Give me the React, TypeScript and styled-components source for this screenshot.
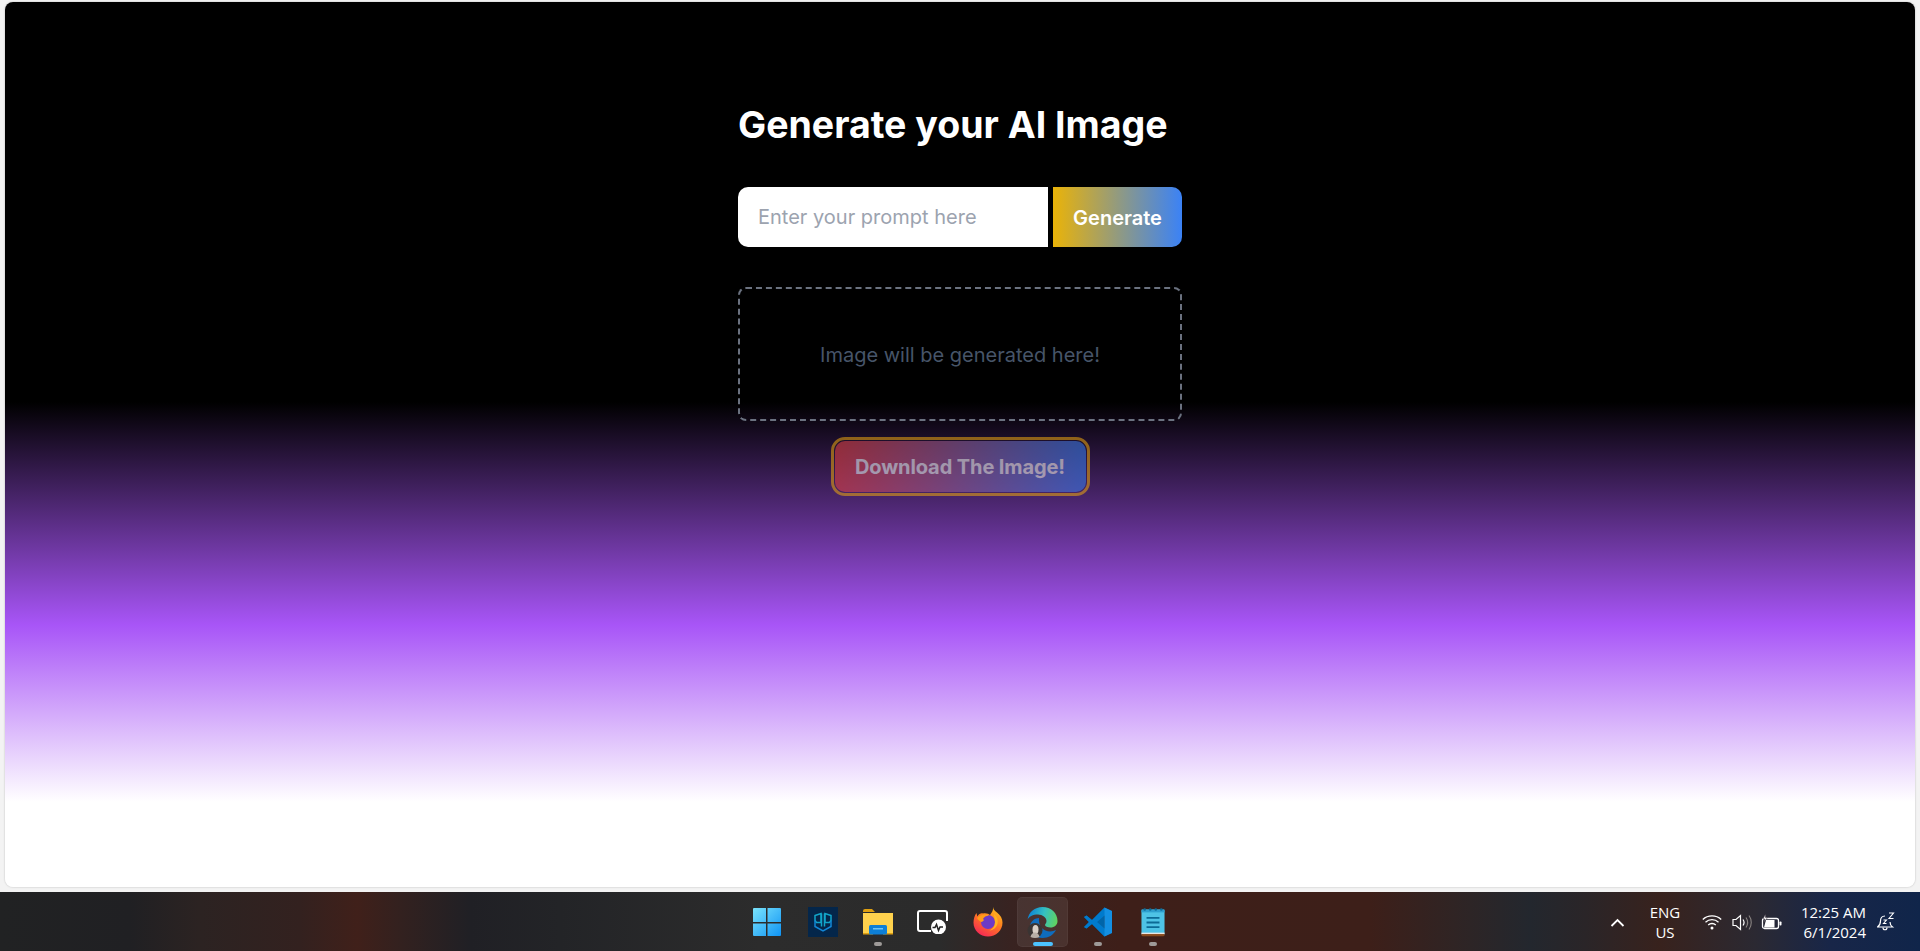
import React, {FC} from 'react';
import styled, {createGlobalStyle} from 'styled-components';

const GlobalStyle = createGlobalStyle`
    html, body {
        margin: 0;
        padding: 0;
        height: 951px;
        overflow: hidden;
        background: #f3f3f3;
        font-family: Inter, "Noto Sans", sans-serif;
    }
`;

const Screen = styled.div`
    width: 1920px;
    height: 951px;
    display: flex;
    flex-direction: column;
    background: #f3f3f3;
`;

const BrowserWindow = styled.main`
    flex: none;
    height: 885px;
    margin: 2px 5px 5px 5px;
    border-radius: 8px;
    box-shadow: 0 0 2px rgba(0, 0, 0, 0.25);
    background: linear-gradient(
        to bottom,
        #000000 0,
        #000000 400px,
        #a855f7 623px,
        #ffffff 800px,
        #ffffff 100%
    );
    display: flex;
    flex-direction: column;
    align-items: center;
    padding-top: 99px;
    box-sizing: border-box;
`;

const Panel = styled.section`
    width: 444px;
    display: flex;
    flex-direction: column;
`;

const Title = styled.h1`
    margin: 0;
    font-size: 37.500px;
    line-height: 48px;
    font-weight: 700;
    color: #ffffff;
`;

const PromptRow = styled.form`
    margin-top: 38px;
    height: 60px;
    display: flex;
    gap: 5px;
`;

const PromptInput = styled.input`
    width: 310px;
    height: 60px;
    box-sizing: border-box;
    border: none;
    outline: none;
    padding: 0 20px;
    font-family: inherit;
    font-size: 20px;
    color: #111827;
    background: #ffffff;
    border-radius: 10px 0 0 10px;

    &::placeholder {
        color: #9ca3af;
        opacity: 1;
    }
`;

const GenerateButton = styled.button`
    width: 129px;
    height: 60px;
    border: none;
    padding: 1px 0 0;
    font-family: inherit;
    font-size: 20px;
    font-weight: 600;
    color: #ffffff;
    background: linear-gradient(to right, #eab308, #3b82f6);
    border-radius: 0 10px 10px 0;
`;

const Placeholder = styled.div`
    margin-top: 40px;
    height: 134px;
    box-sizing: border-box;
    border: 2px dashed #6b7280;
    border-radius: 8px;
    padding-top: 2px;
    display: flex;
    align-items: center;
    justify-content: center;
    font-size: 20px;
    font-weight: 400;
    color: #475569;
`;

const DownloadButton = styled.button`
    align-self: center;
    margin-top: 20px;
    width: 251px;
    height: 51px;
    border: none;
    padding: 0;
    font-family: inherit;
    font-size: 20px;
    font-weight: 700;
    letter-spacing: -0.100px;
    color: #ffffff;
    background: linear-gradient(to right, #ef4444, #3b82f6);
    border-radius: 10px;
    outline: 3px solid #eea80f;
    outline-offset: 1px;
    opacity: 0.55;
`;

const Taskbar = styled.footer`
    flex: 1;
    position: relative;
    padding-top: 1px;
    display: flex;
    align-items: center;
    justify-content: center;
    background: linear-gradient(
        to right,
        #212223 0,
        #202023 130px,
        #2c2322 200px,
        #33211f 300px,
        #40201a 357px,
        #33211f 400px,
        #202025 470px,
        #232427 560px,
        #2c2c2c 760px,
        #2b2b2b 940px,
        #382321 1010px,
        #3e1f19 1120px,
        #3d1f19 1370px,
        #2d2526 1470px,
        #23272e 1530px,
        #2a2528 1585px,
        #38221d 1660px,
        #2b2932 1755px,
        #182648 1830px,
        #10254a 1920px
    );
`;

const AppStrip = styled.div`
    display: flex;
    align-items: center;
`;

const AppSlot = styled.div<{$active?: boolean}>`
    position: relative;
    width: 51px;
    height: 50px;
    margin: 0 2px;
    border-radius: 5px;
    display: flex;
    align-items: center;
    justify-content: center;
    background: ${props => (props.$active ? 'rgba(255, 255, 255, 0.08)' : 'transparent')};
    box-shadow: ${props => (props.$active ? 'inset 0 0 0 1px rgba(255, 255, 255, 0.04)' : 'none')};
`;

const RunDot = styled.span<{$active?: boolean}>`
    position: absolute;
    left: 50%;
    bottom: 1px;
    transform: translateX(-50%);
    width: ${props => (props.$active ? '20px' : '8px')};
    height: 4px;
    border-radius: 2px;
    background: ${props => (props.$active ? '#4cc2ff' : '#9e9a98')};
`;

const Tray = styled.div`
    position: absolute;
    top: 0;
    bottom: 0;
    right: 14px;
    padding-top: 1px;
    display: flex;
    align-items: center;
    color: #ffffff;
`;

const TrayText = styled.div<{$align: string; $width: number}>`
    width: ${props => props.$width}px;
    text-align: ${props => props.$align};
    font-family: "Open Sans", "Noto Sans", sans-serif;
    font-size: 15px;
    line-height: 20px;
    color: #ffffff;
`;

const TrayIcon = styled.span<{$width: number}>`
    width: ${props => props.$width}px;
    display: flex;
    justify-content: center;
`;

const WindowsIcon: FC = () => (
    <svg width="30" height="30" viewBox="1 0 30 30">
        <defs>
            <linearGradient id="win" x1="0" y1="0" x2="1" y2="1">
                <stop offset="0" stopColor="#7ae3fb" />
                <stop offset="1" stopColor="#0f94f5" />
            </linearGradient>
        </defs>
        <path fill="url(#win)" d="M1 2a1 1 0 0 1 1-1h12v14H1zM15.500 1H28a1 1 0 0 1 1 1v13H15.500zM1 16.500h13V29H2a1 1 0 0 1-1-1zM15.500 16.500H29V28a1 1 0 0 1-1 1H15.500z" />
    </svg>
);

const ShieldIcon: FC = () => (
    <svg width="30" height="30" viewBox="0 0 30 30">
        <rect width="30" height="30" fill="#04264a" />
        <g fill="none" stroke="#12a5c9" strokeWidth="1.500">
            <path d="M7 8.500l6-2v9H8.500L7 13.500zM23 8.500l-6-2v9h4.500l1.500-2z" />
            <path d="M13.500 6.500v13M16.500 6.500v13" />
            <path stroke="#1287d6" d="M7 13.500v6l8 4.500 8-4.500v-6" />
        </g>
    </svg>
);

const FolderIcon: FC = () => (
    <svg width="30" height="28" viewBox="0 0 30 28">
        <path fill="#e0a010" d="M0 3a2 2 0 0 1 2-2h7l3 3h-12z" />
        <path fill="#ffd24d" d="M0 5h30v21H0z" />
        <path fill="#e0a010" d="M0 25h10v1.500H0zM20 25h10v1.500H20z" />
        <rect x="6" y="17" width="18" height="9.500" rx="1.500" fill="#0e7fd6" />
        <rect x="10" y="20" width="10" height="1.500" fill="#6ec4f5" />
    </svg>
);

const MonitorIcon: FC = () => (
    <svg width="31" height="24" viewBox="0 0 31 24">
        <path fill="none" stroke="#ffffff" strokeWidth="2" d="M14 21H3a2 2 0 0 1-2-2V3a2 2 0 0 1 2-2h25a2 2 0 0 1 2 2v8" />
        <circle cx="21.500" cy="17" r="7.500" fill="#ffffff" />
        <path fill="none" stroke="#222222" strokeWidth="1.500" d="M15.500 17.500h2.500l1.500-3 2 6 1.500-3.500h3" />
    </svg>
);

const FirefoxIcon: FC = () => (
    <svg width="30" height="30" viewBox="0 0 30 30">
        <defs>
            <linearGradient id="fx" x1="0.800" y1="0" x2="0.200" y2="1">
                <stop offset="0" stopColor="#ffc21f" />
                <stop offset="0.450" stopColor="#ff7a1f" />
                <stop offset="1" stopColor="#f5215a" />
            </linearGradient>
        </defs>
        <path fill="url(#fx)" d="M20 0c.5 2.500 1.500 3.500 4 5.500 3.500 2.800 5.500 6 5.500 10 0 8-6.500 14-14.500 14S.5 23.500.5 15.500C.5 12 1.500 8.500 3.500 6l.8 3.500C6 6.500 8.500 6 10 6.500c3-.8 6 .5 7 1.500 2-2.500 3.500-5 3-8z" />
        <circle cx="15" cy="15" r="7" fill="#6d3bc5" />
        <path fill="#ff9c1a" d="M4 11c3-3 8-4.500 12-2.500-3 .3-5 1.500-6 3.500 2 1 0 2.500-1.500 3C7 14.500 5 13 4 11z" />
        <path fill="#ffb31f" d="M21 7c3 2.500 4.500 6 3.500 10-1 3-3.500 6-8 6.500 3.500-1.500 5.500-4.500 5.500-8 0-3-1-6-1-8.500z" />
    </svg>
);

const EdgeIcon: FC = () => (
    <svg width="31" height="31" viewBox="0 0 31 31">
        <defs>
            <linearGradient id="edgeTop" x1="0" y1="0.500" x2="1" y2="0.700">
                <stop offset="0" stopColor="#0c83d4" />
                <stop offset="0.500" stopColor="#35c1c0" />
                <stop offset="1" stopColor="#62d35c" />
            </linearGradient>
        </defs>
        <path fill="url(#edgeTop)" d="M0.500 13C1.500 5 8 0 15.500 0 24 0 30.500 6 30.500 14c0 4-3 6.500-7 6.500-3 0-5.500-1-5.500-2.500 0-1 1.500-1.500 1.500-4 0-3.500-4-6.500-8.500-6.500-5 0-9.500 2-10.500 5.500z" />
        <path fill="#0f6cbd" d="M12 11c-5 0-9 4-9 9 0 6 6 11 12.500 11 6 0 11-3 13.500-8-3 1.500-7 2-10.500.5-4-2-7-5.500-6.500-12.500z" />
        <circle cx="8" cy="23.500" r="7.500" fill="#3a3433" />
        <ellipse cx="8.500" cy="22.500" rx="3" ry="4.500" fill="#d9cfc6" />
        <path fill="#b8aea6" d="M3.500 30c.5-3 2.500-4.500 4.500-4.500s4 1.500 4.500 4.500c-2.500 1.200-6.500 1.200-9 0z" />
    </svg>
);

const VsCodeIcon: FC = () => (
    <svg width="30" height="30" viewBox="0 0 30 30">
        <path fill="#0065a9" d="M21.500 0.500L9 13 3.500 8.500 1 10l5 5-5 5 2.500 1.500L9 17l12.500 12.500z" />
        <path fill="#007acc" d="M21.500 0.500L29 4v22l-7.500 3.500L9 17l-5.500 4.500L1 20l5-5-5-5 2.500-1.500L9 13zM21.500 8.500L14 15l7.500 6.500z" />
        <path fill="#1f9cf0" d="M21.500 0.500L29 4v22l-7.500 3.500z" opacity="0.600" />
    </svg>
);

const NotepadIcon: FC = () => (
    <svg width="24" height="31" viewBox="0 0 26 31">
        <rect x="0.500" y="1.500" width="25" height="28" rx="1.500" fill="#4ec3e6" />
        <path fill="#2e9fcf" d="M0.500 1.500h25v3h-25z" />
        <path fill="#8a4b1e" d="M0.500 27.500h25V29a1.500 1.500 0 0 1-1.500 1.500H2A1.500 1.500 0 0 1 .5 29z" />
        <path fill="#e8e6e3" d="M0.500 26.500h25v1.500h-25z" />
        <path stroke="#0c6a96" strokeWidth="2" d="M6 10.500h14M6 15.500h14M6 20.500h14" />
        <g fill="#0e6d99">
            <circle cx="4" cy="1.500" r="1.400" />
            <circle cx="10" cy="1.500" r="1.400" />
            <circle cx="16" cy="1.500" r="1.400" />
            <circle cx="22" cy="1.500" r="1.400" />
        </g>
    </svg>
);

const ChevronIcon: FC = () => (
    <svg width="15" height="9" viewBox="0 0 14 9">
        <path fill="none" stroke="#ffffff" strokeWidth="1.800" d="M1 8l6-6 6 6" />
    </svg>
);

const WifiIcon: FC = () => (
    <svg width="20" height="16" viewBox="0 0 20 16">
        <g fill="none" stroke="#ffffff" strokeWidth="1.300">
            <path d="M0.800 5.500c5-4.800 13.400-4.800 18.400 0" />
            <path d="M3.500 8.200c3.600-3.400 9.400-3.400 13 0" />
            <path d="M6.200 11c2.100-2 5.500-2 7.600 0" />
        </g>
        <circle cx="10" cy="14" r="1.500" fill="#ffffff" />
    </svg>
);

const SpeakerIcon: FC = () => (
    <svg width="21" height="17" viewBox="0 0 21 17">
        <path fill="none" stroke="#ffffff" strokeWidth="1.200" d="M1 5.500h3L8.500 1.500v14L4 11.500H1z" />
        <path fill="none" stroke="#ffffff" strokeWidth="1.200" d="M11 5.500c1.200 1.700 1.200 4.300 0 6" />
        <path fill="none" stroke="#8a8583" strokeWidth="1.100" d="M14 3.500c2 3 2 7 0 10M17 1.500c3 4 3 10 0 14" />
    </svg>
);

const BatteryIcon: FC = () => (
    <svg width="21" height="17" viewBox="0 0 21 17">
        <rect x="1.500" y="4.500" width="16" height="10" rx="2" fill="none" stroke="#ffffff" strokeWidth="1.300" />
        <path fill="#ffffff" d="M3 13.500l2-7.500h8.500v7.500z" />
        <rect x="18.500" y="7.500" width="2" height="4" rx="0.800" fill="#ffffff" />
        <path fill="#ffffff" d="M4.500 0L2 5h2l-1 3.500L6.500 3.500h-2z" stroke="#2a2230" strokeWidth="0.500" />
    </svg>
);

const BellIcon: FC = () => (
    <svg width="18" height="20" viewBox="0 0 18 20">
        <path fill="none" stroke="#ffffff" strokeWidth="1.200" d="M8 4C5 4 3.500 6 3.500 9c0 3-1 4.500-3 6h15c-2-1.500-2.500-3-2.500-5" />
        <path fill="none" stroke="#ffffff" strokeWidth="1.200" d="M6 15.500c0 3 4 3 4 0" />
        <path fill="none" stroke="#ffffff" strokeWidth="1.100" d="M6.500 8h3l-3 3.500h3M12 1h4.500L12 6.500h4.500" />
    </svg>
);

const apps = [
    {icon: <WindowsIcon />},
    {icon: <ShieldIcon />},
    {icon: <FolderIcon />, running: true},
    {icon: <MonitorIcon />},
    {icon: <FirefoxIcon />},
    {icon: <EdgeIcon />, active: true},
    {icon: <VsCodeIcon />, running: true},
    {icon: <NotepadIcon />, running: true},
];

const App: FC = () => (
    <Screen>
        <GlobalStyle />
        <BrowserWindow>
            <Panel>
                <Title>Generate your AI Image</Title>
                <PromptRow>
                    <PromptInput type="text" placeholder="Enter your prompt here" />
                    <GenerateButton type="button">Generate</GenerateButton>
                </PromptRow>
                <Placeholder>Image will be generated here!</Placeholder>
                <DownloadButton type="button">Download The Image!</DownloadButton>
            </Panel>
        </BrowserWindow>
        <Taskbar>
            <AppStrip>
                {apps.map((app, i) => (
                    <AppSlot key={i} $active={app.active}>
                        {app.icon}
                        {(app.running || app.active) && <RunDot $active={app.active} />}
                    </AppSlot>
                ))}
            </AppStrip>
            <Tray>
                <TrayIcon $width={34}><ChevronIcon /></TrayIcon>
                <TrayText $align="center" $width={62}>ENG<br />US</TrayText>
                <TrayIcon $width={32}><WifiIcon /></TrayIcon>
                <TrayIcon $width={28}><SpeakerIcon /></TrayIcon>
                <TrayIcon $width={30}><BatteryIcon /></TrayIcon>
                <TrayText $align="right" $width={80}>12:25 AM<br />6/1/2024</TrayText>
                <TrayIcon $width={40}><BellIcon /></TrayIcon>
            </Tray>
        </Taskbar>
    </Screen>
);

export default App;
